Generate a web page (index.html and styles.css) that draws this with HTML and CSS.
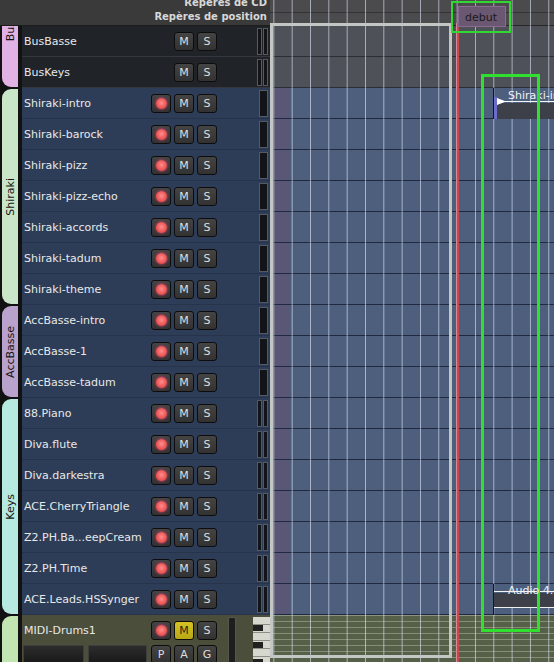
FILE: index.html
```html
<!DOCTYPE html>
<html lang="fr">
<head>
    <meta charset="UTF-8">
    <meta name="viewport" content="width=device-width, initial-scale=1.0">
    <title>Éditeur - pistes</title>
    <link rel="stylesheet" href="styles.css">
</head>
<body>
<div class="editor">

    <!-- liste des pistes -->
    <div class="track-pane">
        <div class="pane-header">
            <div>Repères de CD</div>
            <div>Repères de position</div>
        </div>

        <div class="group group-bus">
            <div class="tab-col"><div class="tab"><span>Bus</span></div></div>
            <div class="rows">
                <div class="track bus">
                    <span class="name">BusBasse</span>
                    <span class="btns"><span class="btn ghost"></span><span class="btn">M</span><span class="btn">S</span></span>
                    <span class="meter"><i></i><i></i></span>
                </div>
                <div class="track bus">
                    <span class="name">BusKeys</span>
                    <span class="btns"><span class="btn ghost"></span><span class="btn">M</span><span class="btn">S</span></span>
                    <span class="meter"><i></i><i></i></span>
                </div>
            </div>
        </div>

        <div class="group group-shiraki">
            <div class="tab-col"><div class="tab"><span>Shiraki</span></div></div>
            <div class="rows">
                <div class="track audio">
                    <span class="name">Shiraki-intro</span>
                    <span class="btns"><span class="btn rec"></span><span class="btn">M</span><span class="btn">S</span></span>
                    <span class="meter mono"><i></i></span>
                </div>
                <div class="track audio">
                    <span class="name">Shiraki-barock</span>
                    <span class="btns"><span class="btn rec"></span><span class="btn">M</span><span class="btn">S</span></span>
                    <span class="meter mono"><i></i></span>
                </div>
                <div class="track audio">
                    <span class="name">Shiraki-pizz</span>
                    <span class="btns"><span class="btn rec"></span><span class="btn">M</span><span class="btn">S</span></span>
                    <span class="meter mono"><i></i></span>
                </div>
                <div class="track audio">
                    <span class="name">Shiraki-pizz-echo</span>
                    <span class="btns"><span class="btn rec"></span><span class="btn">M</span><span class="btn">S</span></span>
                    <span class="meter mono"><i></i></span>
                </div>
                <div class="track audio">
                    <span class="name">Shiraki-accords</span>
                    <span class="btns"><span class="btn rec"></span><span class="btn">M</span><span class="btn">S</span></span>
                    <span class="meter mono"><i></i></span>
                </div>
                <div class="track audio">
                    <span class="name">Shiraki-tadum</span>
                    <span class="btns"><span class="btn rec"></span><span class="btn">M</span><span class="btn">S</span></span>
                    <span class="meter mono"><i></i></span>
                </div>
                <div class="track audio">
                    <span class="name">Shiraki-theme</span>
                    <span class="btns"><span class="btn rec"></span><span class="btn">M</span><span class="btn">S</span></span>
                    <span class="meter mono"><i></i></span>
                </div>
            </div>
        </div>

        <div class="group group-accbasse">
            <div class="tab-col"><div class="tab"><span>AccBasse</span></div></div>
            <div class="rows">
                <div class="track audio">
                    <span class="name">AccBasse-intro</span>
                    <span class="btns"><span class="btn rec"></span><span class="btn">M</span><span class="btn">S</span></span>
                    <span class="meter mono"><i></i></span>
                </div>
                <div class="track audio">
                    <span class="name">AccBasse-1</span>
                    <span class="btns"><span class="btn rec"></span><span class="btn">M</span><span class="btn">S</span></span>
                    <span class="meter mono"><i></i></span>
                </div>
                <div class="track audio">
                    <span class="name">AccBasse-tadum</span>
                    <span class="btns"><span class="btn rec"></span><span class="btn">M</span><span class="btn">S</span></span>
                    <span class="meter mono"><i></i></span>
                </div>
            </div>
        </div>

        <div class="group group-keys">
            <div class="tab-col"><div class="tab"><span>Keys</span></div></div>
            <div class="rows">
                <div class="track audio">
                    <span class="name">88.Piano</span>
                    <span class="btns"><span class="btn rec"></span><span class="btn">M</span><span class="btn">S</span></span>
                    <span class="meter"><i></i><i></i></span>
                </div>
                <div class="track audio">
                    <span class="name">Diva.flute</span>
                    <span class="btns"><span class="btn rec"></span><span class="btn">M</span><span class="btn">S</span></span>
                    <span class="meter"><i></i><i></i></span>
                </div>
                <div class="track audio">
                    <span class="name">Diva.darkestra</span>
                    <span class="btns"><span class="btn rec"></span><span class="btn">M</span><span class="btn">S</span></span>
                    <span class="meter"><i></i><i></i></span>
                </div>
                <div class="track audio">
                    <span class="name">ACE.CherryTriangle</span>
                    <span class="btns"><span class="btn rec"></span><span class="btn">M</span><span class="btn">S</span></span>
                    <span class="meter"><i></i><i></i></span>
                </div>
                <div class="track audio">
                    <span class="name">Z2.PH.Ba...eepCream</span>
                    <span class="btns"><span class="btn rec"></span><span class="btn">M</span><span class="btn">S</span></span>
                    <span class="meter"><i></i><i></i></span>
                </div>
                <div class="track audio">
                    <span class="name">Z2.PH.Time</span>
                    <span class="btns"><span class="btn rec"></span><span class="btn">M</span><span class="btn">S</span></span>
                    <span class="meter"><i></i><i></i></span>
                </div>
                <div class="track audio">
                    <span class="name">ACE.Leads.HSSynger</span>
                    <span class="btns"><span class="btn rec"></span><span class="btn">M</span><span class="btn">S</span></span>
                    <span class="meter"><i></i><i></i></span>
                </div>
            </div>
        </div>

        <div class="group group-midi">
            <div class="tab-col"><div class="tab"><span>MIDI</span></div></div>
            <div class="rows">
                <div class="track midi">
                    <div class="midi-main">
                        <div class="midi-line">
                            <span class="name">MIDI-Drums1</span>
                            <span class="btns"><span class="btn rec"></span><span class="btn on">M</span><span class="btn">S</span></span>
                        </div>
                        <div class="midi-line sub">
                            <span class="box wide"></span>
                            <span class="box"></span>
                            <span class="btns"><span class="btn">P</span><span class="btn">A</span><span class="btn">G</span></span>
                        </div>
                    </div>
                    <span class="scroller"></span>
                    <span class="piano"></span>
                </div>
            </div>
        </div>
    </div>

    <!-- zone d'édition -->
    <div class="canvas">
        <div class="ruler"></div>
        <div class="lane bus"></div>
        <div class="lane bus"></div>
        <div class="lane audio"></div>
        <div class="lane audio"></div>
        <div class="lane audio"></div>
        <div class="lane audio"></div>
        <div class="lane audio"></div>
        <div class="lane audio"></div>
        <div class="lane audio"></div>
        <div class="lane audio"></div>
        <div class="lane audio"></div>
        <div class="lane audio"></div>
        <div class="lane audio"></div>
        <div class="lane audio"></div>
        <div class="lane audio"></div>
        <div class="lane audio"></div>
        <div class="lane audio"></div>
        <div class="lane audio"></div>
        <div class="lane audio"></div>
        <div class="lane midi"></div>

        <div class="grid"></div>

        <div class="region region-shiraki">
            <svg class="fade" width="12" height="9" viewBox="0 0 12 9"><path d="M1 1 L10 4.5 L1 8 Z" fill="#fff"/><path d="M10 4.5 H12" stroke="#fff"/></svg>
            <div class="region-name">Shiraki-intro</div>
            <div class="region-line"></div>
            <div class="region-body"></div>
        </div>
        <div class="region region-audio">
            <div class="region-name">Audio 4.3</div>
            <div class="region-line"></div>
            <div class="region-body"></div>
        </div>

        <div class="selection"></div>
        <div class="playhead"></div>
        <div class="clip-box"></div>
        <div class="marker"><span>debut</span></div>
    </div>
</div>
</body>
</html>
```

FILE: styles.css
```css
* {
    box-sizing: border-box;
}
body {
    margin: 0;
    background-color: #141414;
    font-family: "DejaVu Sans", "Noto Sans", sans-serif;
    font-size: 11px;
    color: #e4e4e4;
    overflow: hidden;
}
.editor {
    display: flex;
    height: 662px;
    overflow: hidden;
}

/* liste des pistes */
.track-pane {
    width: 270px;
    flex: none;
    display: flex;
    flex-direction: column;
    background-color: #131313;
}
.pane-header {
    height: 26px;
    flex: none;
    display: flex;
    flex-direction: column;
    justify-content: flex-end;
    align-items: flex-end;
    padding: 0 3px 1px 0;
    background-color: #3a3a3a;
    border-bottom: 1px solid #1c1c1c;
    overflow: hidden;
    font-size: 10px;
    font-weight: bold;
    line-height: 14px;
    color: #d8d8d8;
}
.group {
    display: flex;
    flex: none;
}
.tab-col {
    width: 22px;
    flex: none;
    padding: 1px 4px 1px 2px;
    background-color: #121212;
}
.tab {
    height: 100%;
    border-radius: 9px 0 0 9px;
    display: flex;
    flex-direction: column;
    justify-content: center;
    align-items: center;
    overflow: hidden;
    color: #141414;
}
.tab span {
    writing-mode: vertical-rl;
    transform: rotate(180deg);
    white-space: nowrap;
}
.group-bus .tab-col {
    padding-top: 0;
}
.group-bus .tab {
    background-color: #e2b2e4;
    border-radius: 0 0 0 9px;
    justify-content: flex-start;
}
.group-bus .tab span {
    margin-top: -5px;
}
.group-shiraki .tab {
    background-color: #c9e6c9;
}
.group-accbasse .tab {
    background-color: #b9a2cc;
}
.group-keys .tab {
    background-color: #b6e9e0;
}
.group-midi .tab {
    background-color: #c2e6b2;
    justify-content: flex-start;
}
.group-midi .tab span {
    visibility: hidden;
}
.rows {
    flex: 1;
    display: flex;
    flex-direction: column;
}
.track {
    height: 31px;
    display: flex;
    align-items: center;
    padding: 0 2px;
    border-bottom: 1px solid #26334b;
}
.track.bus {
    background-color: #202328;
    border-bottom-color: #34373d;
}
.track.audio {
    background-color: #2e3d57;
}
.name {
    flex: 1;
    min-width: 0;
    white-space: nowrap;
    color: #e8e8e8;
}
.btns {
    width: 66px;
    flex: none;
    display: flex;
    gap: 3px;
}
.btn {
    width: 20px;
    height: 19px;
    display: flex;
    align-items: center;
    justify-content: center;
    border: 1px solid #0d0d0d;
    border-radius: 3px;
    background: linear-gradient(#444, #323232);
    color: #dedede;
    font-size: 11px;
}
.btn.ghost {
    visibility: hidden;
}
.btn.rec::before {
    content: "";
    width: 11px;
    height: 11px;
    border-radius: 50%;
    background: radial-gradient(circle at 50% 45%, #ff8c8c, #ec5454 60%, #c93c4c);
    box-shadow: 0 0 2px 1px rgba(214, 60, 110, 0.6);
}
.btn.on {
    background: linear-gradient(#d6c322, #b9a716);
    color: #2a2a10;
}
.meter {
    width: 11px;
    height: 27px;
    margin-left: 40px;
    flex: none;
    display: flex;
    justify-content: flex-end;
    gap: 1px;
}
.meter i {
    flex: 1;
    background-color: #121418;
    border: 1px solid #545962;
}
.meter.mono i {
    flex: none;
    width: 9px;
}

/* piste MIDI */
.track.midi {
    height: 62px;
    padding: 0;
    align-items: flex-start;
    background-color: #4a4e3b;
    border-bottom: none;
}
.midi-main {
    width: 195px;
    flex: none;
    display: flex;
    flex-direction: column;
}
.midi-line {
    height: 30px;
    display: flex;
    align-items: center;
    padding-left: 2px;
}
.midi-line.sub {
    height: auto;
    align-items: flex-start;
    padding-left: 1px;
    gap: 4px;
}
.box {
    width: 59px;
    height: 18px;
    background: linear-gradient(#2c2c2c, #1a1a1a);
    border: 1px solid #3e3e3e;
}
.box.wide {
    width: 61px;
}
.scroller {
    width: 8px;
    height: 60px;
    margin: 2px 0 0 11px;
    flex: none;
    background-color: #1e1e1e;
    border: 1px solid #55584c;
    border-radius: 2px;
}
.piano {
    width: 17px;
    height: 60px;
    margin: 2px 0 0 17px;
    flex: none;
    background: repeating-linear-gradient(#d6d8d0 0 7px, #8c8e86 7px 8px);
}
.piano::before {
    content: "";
    display: block;
    width: 10px;
    height: 100%;
    background: repeating-linear-gradient(transparent 0 8px, #202020 8px 14px, transparent 14px 17px);
}

/* zone d'édition */
.canvas {
    flex: 1;
    position: relative;
    display: flex;
    flex-direction: column;
    overflow: hidden;
    background-color: #4a4a4c;
}
.ruler {
    height: 26px;
    flex: none;
    background: linear-gradient(#4b4b4e 0 12px, #333336 12px 13px, #4b4b4e 13px 25px, #262628 25px);
}
.lane {
    height: 31px;
    flex: none;
    border-bottom: 1px solid #1f2a42;
}
.lane.bus {
    background-color: #4e5157;
    border-bottom-color: #2b2e33;
}
.lane.audio {
    background: linear-gradient(90deg, transparent 2px, #5a5676 2px 20px, transparent 20px), #4e5f7e;
}
.lane.midi {
    flex: 1;
    border-top: 1px solid #8c9480;
    border-bottom: none;
    background: repeating-linear-gradient(#566049 0 5px, #858e74 5px 6px);
}
.grid {
    position: absolute;
    inset: 0;
    background: linear-gradient(90deg, rgba(230, 237, 255, 0.6) 1px, transparent 1px) 21.7px 0 / 18.33px 100%;
    pointer-events: none;
}
.region {
    position: absolute;
    left: 223px;
    right: 0;
    height: 31px;
    display: flex;
    flex-direction: column;
    border-left: 1px solid #15171c;
    overflow: hidden;
}
.region-shiraki {
    top: 88px;
}
.region-audio {
    top: 584px;
}
.region-name {
    height: 13px;
    padding: 2px 0 0 14px;
    line-height: 11px;
    white-space: nowrap;
    color: #f2f2f2;
}
.region-line {
    height: 1px;
    flex: none;
    background-color: #f4f4f4;
}
.region-body {
    flex: 1;
    margin-top: 1px;
    background-color: #3e4049;
}
.region-shiraki::before {
    content: "";
    position: absolute;
    left: 0;
    top: 9px;
    bottom: 0;
    width: 3px;
    background-color: #6c6ccc;
}
.fade {
    position: absolute;
    left: 2px;
    top: 9px;
}
.region-audio .region-name {
    position: relative;
    z-index: 1;
    height: 7px;
    padding-top: 1px;
}
.region-audio .region-body {
    flex: none;
    height: 15px;
    border-bottom: 1px solid #f0f0f0;
}
.selection {
    position: absolute;
    left: 0;
    top: 23px;
    width: 182px;
    height: 635px;
    border: 3px solid #c3c7c3;
    pointer-events: none;
}
.playhead {
    position: absolute;
    left: 186px;
    top: 23px;
    bottom: 0;
    width: 3px;
    background-color: #c44a4c;
    border-left: 1px solid #d88a9a;
}
.clip-box {
    position: absolute;
    left: 211px;
    top: 74px;
    width: 59px;
    height: 558px;
    border: 3px solid #2fe02f;
}
.marker {
    position: absolute;
    left: 181px;
    top: 1px;
    width: 60px;
    height: 32px;
    padding: 3px 0 0 5px;
    border: 2px solid #30d830;
}
.marker span {
    display: block;
    width: 48px;
    height: 21px;
    padding-left: 6px;
    line-height: 21px;
    background-color: #6a5872;
    border: 1px solid #8a6a92;
    color: #1a1a1a;
}
```
